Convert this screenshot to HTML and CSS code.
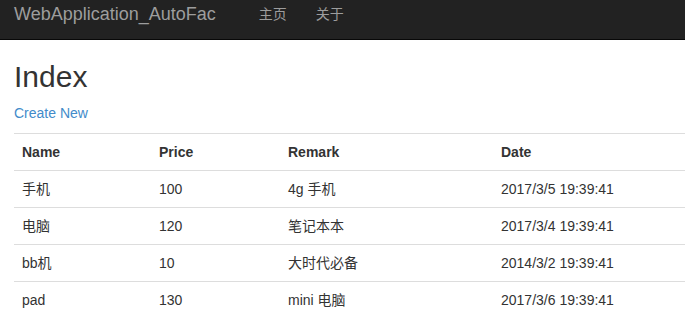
FILE: index.html
```html
<!DOCTYPE html>
<html lang="zh-CN">
<head>
    <meta charset="UTF-8">
    <meta name="viewport" content="width=device-width, initial-scale=1.0">
    <link rel="stylesheet" href="styles.css">
    <title>Index - WebApplication_AutoFac</title>
</head>

<body>
    <div class="navbar">
        <a class="brand" href="#">WebApplication_AutoFac</a>
        <ul class="nav">
            <li><a href="#">主页</a></li>
            <li><a href="#">关于</a></li>
        </ul>
    </div>

    <div class="container">
        <h2>Index</h2>
        <p><a class="link" href="#">Create New</a></p>
        <table class="table">
            <colgroup>
                <col class="col-name">
                <col class="col-price">
                <col class="col-remark">
                <col>
            </colgroup>
            <tr>
                <th>Name</th>
                <th>Price</th>
                <th>Remark</th>
                <th>Date</th>
            </tr>
            <tr>
                <td>手机</td>
                <td>100</td>
                <td>4g 手机</td>
                <td>2017/3/5 19:39:41</td>
            </tr>
            <tr>
                <td>电脑</td>
                <td>120</td>
                <td>笔记本本</td>
                <td>2017/3/4 19:39:41</td>
            </tr>
            <tr>
                <td>bb机</td>
                <td>10</td>
                <td>大时代必备</td>
                <td>2014/3/2 19:39:41</td>
            </tr>
            <tr>
                <td>pad</td>
                <td>130</td>
                <td>mini 电脑</td>
                <td>2017/3/6 19:39:41</td>
            </tr>
        </table>
    </div>
</body>

</html>
```

FILE: styles.css
```css
body {
    margin: 0;
    padding: 0;
    font-family: "Liberation Sans", Arial, "Noto Sans CJK SC", sans-serif;
    font-size: 14px;
    line-height: 20px;
    color: #333;
    background-color: #fff;
}

.navbar {
    display: flex;
    height: 40px;
    box-sizing: border-box;
    padding: 4px 0 0 14px;
    background-color: #222;
    border-bottom: 1px solid #080808;
}

.brand {
    font-size: 18px;
    line-height: 20px;
    color: #9d9d9d;
    text-decoration: none;
}

.nav {
    display: flex;
    list-style: none;
    margin: 0 0 0 28px;
    padding: 0;
}

.nav a {
    display: block;
    padding: 0 14px 0 15px;
    line-height: 20px;
    color: #9d9d9d;
    text-decoration: none;
}

.container {
    padding: 0 0 0 14px;
}

h2 {
    margin: 20px 0 10px;
    font-size: 30px;
    font-weight: 500;
    line-height: 33px;
}

p {
    margin: 0 0 10px;
}

.link {
    color: #428bca;
    text-decoration: none;
}

.table {
    width: 100%;
    border-collapse: collapse;
    border-spacing: 0;
}

.col-name {
    width: 137px;
}

.col-price {
    width: 129px;
}

.col-remark {
    width: 213px;
}

.table th,
.table td {
    padding: 8px;
    text-align: left;
    vertical-align: top;
    line-height: 20px;
    border-top: 1px solid #ddd;
}

.table th {
    font-weight: bold;
    border-bottom: 1px solid #ddd;
}
```
